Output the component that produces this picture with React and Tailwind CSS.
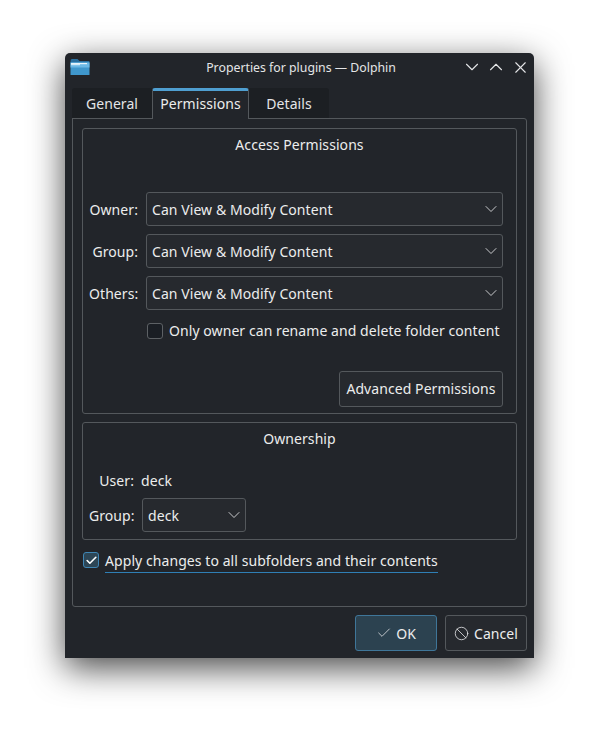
import React from 'react';
import { Check, Ban, ChevronDown, ChevronUp, X } from 'lucide-react';

function FolderIcon() {
    return (
        <svg width="20" height="18" viewBox="0 0 20 18" className="block">
            <path d="M0.5 3 Q0.5 1 2 1 H7.5 L9.5 3 H19 Q19.5 3 19.5 4 V5 H0.5 Z" fill="#2a6f9e" />
            <rect x="0.5" y="4.5" width="19" height="12.5" rx="0.5" fill="#3f97cc" />
            <rect x="0.5" y="4.5" width="19" height="5" fill="#6cb9e6" />
            <rect x="1" y="5" width="16" height="1.2" fill="#e8f4fb" />
            <rect x="1" y="6.2" width="9" height="1" fill="#e8f4fb" />
        </svg>
    );
}

function Combo({ value, className }) {
    return (
        <div className={`flex h-[34px] items-center justify-between rounded-[3px] border border-[#54585c] bg-[#26292e] pl-[5px] pr-px ${className}`}>
            <span className="pt-px">{value}</span>
            <ChevronDown className="h-[20px] w-[20px] text-[#d6d8da]" strokeWidth={1.1} />
        </div>
    );
}

function PermRow({ label }) {
    return (
        <div className="flex items-center">
            <span className="w-[49px] pt-px text-right">{label}</span>
            <Combo value="Can View & Modify Content" className="ml-[8px] flex-1" />
        </div>
    );
}

export default function App() {
    return (
        <div className="h-[735px] w-[599px] overflow-hidden bg-white pl-[65px] pt-[53px]">
            <div
                className="flex h-[605px] w-[469px] flex-col rounded-t-[5px] bg-[#22252a] text-[14px] leading-[20px] tracking-[0.07px] text-[#eceded] shadow-[0_10px_34px_rgba(0,0,0,0.72)]"
                style={{ fontFamily: '"Noto Sans", sans-serif' }}
            >
                {/* title bar */}
                <div className="flex h-[28px] items-center pl-[5px] pr-[2px]">
                    <div className="w-[72px]">
                        <FolderIcon />
                    </div>
                    <div className="flex-1 pt-px text-center text-[12.3px] tracking-normal text-[#e4e5e7]">Properties for plugins — Dolphin</div>
                    <div className="flex w-[72px] items-center text-[#e4e5e7]">
                        <div className="flex w-6 justify-center">
                            <ChevronDown className="h-[22px] w-[22px]" strokeWidth={1.2} />
                        </div>
                        <div className="flex w-6 justify-center">
                            <ChevronUp className="h-[22px] w-[22px]" strokeWidth={1.2} />
                        </div>
                        <div className="flex w-6 justify-center">
                            <X className="h-[19px] w-[19px]" strokeWidth={1.4} />
                        </div>
                    </div>
                </div>

                {/* tabs */}
                <div className="mt-[7px] flex h-[31px] pl-[7px]">
                    <div className="flex w-[80px] items-center justify-center rounded-tl-[3px] border-b border-[#54585c] bg-[#1c1f23] pt-px text-[#e4e5e7]">General</div>
                    <div className="relative z-10 flex h-[31px] w-[97px] items-center justify-center rounded-t-[3px] border-x border-t-[3px] border-x-[#54585c] border-t-[#4f9fd1] bg-[#22252a] pb-[2px]">Permissions</div>
                    <div className="flex w-[80px] items-center justify-center rounded-tr-[3px] border-b border-[#54585c] bg-[#1c1f23] pt-px text-[#e4e5e7]">Details</div>
                </div>

                {/* tab page */}
                <div className="mx-[7px] -mt-px flex h-[489px] flex-col rounded-b-[3px] rounded-tr-[3px] border border-[#54585c] px-[9px] pt-[9px]">
                    <div className="flex h-[286px] flex-col rounded-[3px] border border-[#54585c] pl-[6px] pr-[13px] pt-[6px]">
                        <div className="pl-[7px] text-center">Access Permissions</div>
                        <div className="mt-[37px] flex flex-col gap-[8px]">
                            <PermRow label="Owner:" />
                            <PermRow label="Group:" />
                            <PermRow label="Others:" />
                        </div>
                        <div className="ml-[58px] mt-[10px] flex items-center">
                            <div className="h-[16px] w-[16px] rounded-[3px] border border-[#5d6165] bg-[#1a1e24]" />
                            <span className="ml-[6px] whitespace-nowrap pt-px">Only owner can rename and delete folder content</span>
                        </div>
                        <div className="mt-[30px] flex justify-end">
                            <div className="flex h-[36px] w-[164px] items-center justify-center rounded-[3px] border border-[#54585c] bg-[#26292e]">Advanced Permissions</div>
                        </div>
                    </div>

                    <div className="mt-[8px] flex h-[118px] flex-col rounded-[3px] border border-[#54585c] px-[6px] pt-[6px]">
                        <div className="text-center">Ownership</div>
                        <div className="mt-[22px] flex items-center">
                            <span className="w-[45px] text-right">User:</span>
                            <span className="ml-[7px]">deck</span>
                        </div>
                        <div className="mt-[7px] flex items-center">
                            <span className="w-[45px] pt-px text-right">Group:</span>
                            <Combo value="deck" className="ml-[8px] w-[104px]" />
                        </div>
                    </div>

                    <div className="ml-px mt-[11px] flex items-start">
                        <div className="mt-px flex h-[16px] w-[16px] items-center justify-center rounded-[3px] border border-[#3f86b5] bg-[#2d4656]">
                            <Check className="h-[13px] w-[13px] text-white" strokeWidth={3} />
                        </div>
                        <span className="ml-[6px] whitespace-nowrap border-b border-[#2f7fb5] pb-px">Apply changes to all subfolders and their contents</span>
                    </div>
                </div>

                {/* buttons */}
                <div className="mr-[7px] mt-[8px] flex justify-end gap-[8px]">
                    <div className="flex h-[36px] w-[82px] items-center justify-center gap-[4px] rounded-[3px] border border-[#3f7699] bg-[#2c4250]">
                        <Check className="h-[16px] w-[16px] text-[#e4e5e7]" strokeWidth={1.2} />
                        <span className="pt-px">OK</span>
                    </div>
                    <div className="flex h-[36px] w-[82px] items-center justify-center gap-[5px] rounded-[3px] border border-[#54585c] bg-[#26292e]">
                        <Ban className="h-[15px] w-[15px] text-[#e4e5e7]" strokeWidth={1.3} />
                        <span className="pt-px">Cancel</span>
                    </div>
                </div>
            </div>
        </div>
    );
}
